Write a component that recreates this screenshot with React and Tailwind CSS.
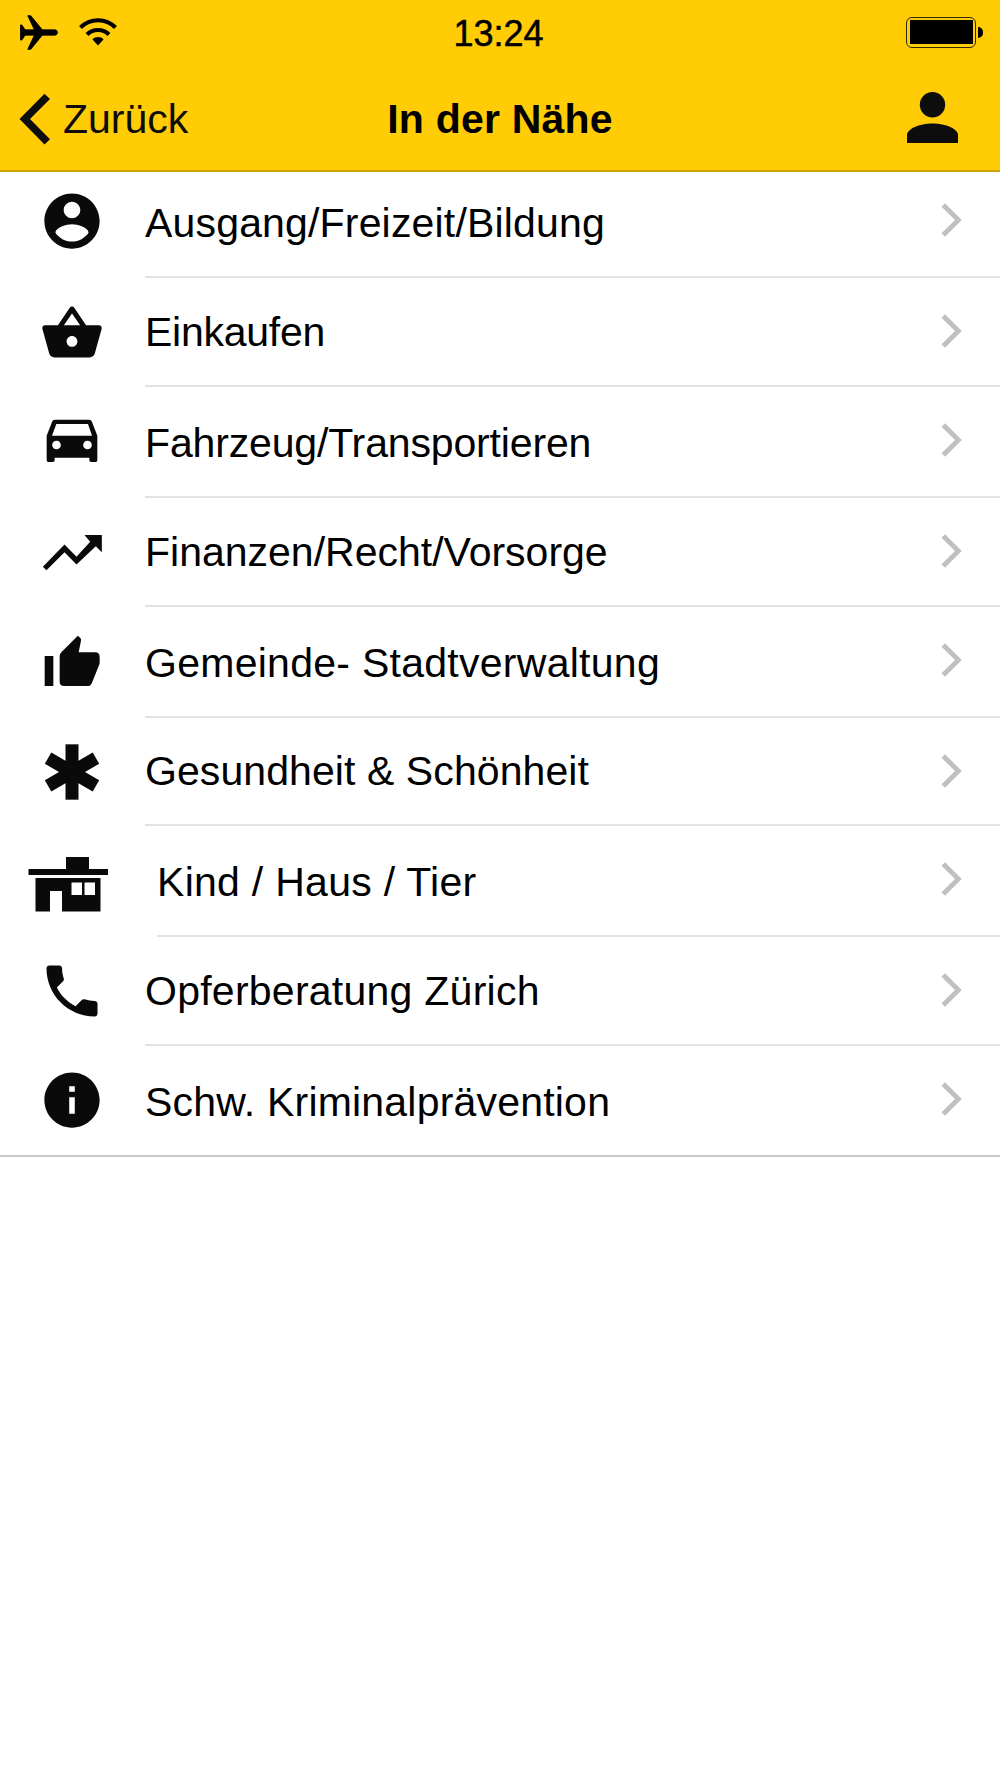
import React from 'react';
import { IoMdBasket, IoMdCall, IoMdContact, IoMdInformationCircle } from 'react-icons/io';

const CarIcon = ({ className }) => (
  <svg viewBox="0 0 204 204" className={className} fill="currentColor">
    <path
      fillRule="evenodd"
      d="M51 38H153q7 0 9 7L178 86V160q0 5-5 5h-14q-5 0-5-5v-8H50v8q0 5-5 5H31q-5 0-5-5V86L42 45q2-7 9-7zM55 51L42 86H162L150 51zM55.500 101a13 13 0 1 0 0 26a13 13 0 1 0 0-26zM148.500 101a13 13 0 1 0 0 26a13 13 0 1 0 0-26z"
    />
  </svg>
);

const TrendIcon = ({ className }) => (
  <svg viewBox="0 0 204 204" className={className} fill="currentColor">
    <path d="M14.500 146L79.500 79.500L115.500 116L156.500 71.500L139.500 51H191.500V103L173.500 85L115.500 139.500L79.500 103L25.500 157z" />
  </svg>
);

const ThumbIcon = ({ className }) => (
  <svg viewBox="0 0 204 204" className={className} fill="currentColor">
    <path d="M20 87h26v90H20z" />
    <path d="M119.500 26L127 33q3 3 2 8L122 76H172q13 0 13 15V106q0 5-2 9L162 167q-4 10-13 10H79q-14 0-14-13V88q0-7 5-12z" />
  </svg>
);

const AsteriskIcon = ({ className }) => (
  <svg viewBox="0 0 204 204" className={className} fill="currentColor">
    <rect x="82.500" y="19" width="39" height="166" />
    <rect x="82.500" y="19" width="39" height="166" transform="rotate(60 102 102)" />
    <rect x="82.500" y="19" width="39" height="166" transform="rotate(-60 102 102)" />
  </svg>
);

const HouseIcon = () => (
  <svg viewBox="0 0 80 56" className="w-20 h-14 mt-[11px]" fill="currentColor">
    <path d="M38 0h23v12h19v6H.5v-6H38z" />
    <path fillRule="evenodd" d="M7.500 21H72.500v33.500H34V34H22v20.500H7.500zM43.500 25.500V38h10.500V25.500zM56.500 25.500V38h10.500V25.500z" />
  </svg>
);

const categories = [
  { label: 'Ausgang/Freizeit/Bildung', icon: IoMdContact, height: 'h-[111px]', tracking: 'tracking-[0.17px]' },
  { label: 'Einkaufen', icon: IoMdBasket, height: 'h-[109px]', tracking: 'tracking-[-0.25px]' },
  { label: 'Fahrzeug/Transportieren', icon: CarIcon, height: 'h-[111px]', tracking: 'tracking-[-0.15px]' },
  { label: 'Finanzen/Recht/Vorsorge', icon: TrendIcon, height: 'h-[109px]', tracking: 'tracking-normal' },
  { label: 'Gemeinde- Stadtverwaltung', icon: ThumbIcon, height: 'h-[111px]', tracking: 'tracking-[0.27px]' },
  { label: 'Gesundheit & Schönheit', icon: AsteriskIcon, height: 'h-[108px]', tracking: 'tracking-[0.08px]' },
  { label: 'Kind / Haus / Tier', icon: HouseIcon, height: 'h-[111px]', tracking: 'tracking-[0.28px]', wide: true },
  { label: 'Opferberatung Zürich', icon: IoMdCall, height: 'h-[109px]', tracking: 'tracking-[0.25px]' },
  { label: 'Schw. Kriminalprävention', icon: IoMdInformationCircle, height: 'h-[111px]', tracking: 'tracking-[0.2px]' },
];

const StatusBar = () => (
  <div className="grid grid-cols-3 items-center h-16 pl-[17px] pr-[17px]">
    <div className="flex items-center gap-[21px] pl-[3px]">
      <svg viewBox="0 0 114 106" className="w-[38px] h-[35px]" fill="currentColor" stroke="currentColor" strokeWidth="2.500">
        <path d="M106 45q7 1 7 8t-7 8H67L32 104H23L43 61L15 61L5 76H1V30H5L15 45L43 45L23 2H32L67 45z" />
      </svg>
      <svg viewBox="0 0 38 28" className="w-[38px] h-7" fill="none" stroke="currentColor" strokeWidth="4">
        <path d="M1.500 9.500C11 -.3 27 -.3 36.500 9.500" />
        <path d="M8 16.500C14 10.500 24 10.500 30 16.500" />
        <path d="M13.500 21.500C16 18.300 22 18.300 24.500 21.500L19 27.500z" fill="currentColor" stroke="none" />
      </svg>
    </div>
    <span className="mt-[3px] pr-[3px] text-center text-[36px] leading-none [-webkit-text-stroke:0.5px_black]">13:24</span>
    <div className="flex items-center justify-end gap-0.5">
      <div className="w-[70px] h-[31px] p-[2.500px] border-[1.500px] border-black/80 rounded-md">
        <div className="w-full h-full bg-black" />
      </div>
      <div className="w-[5px] h-[11px] bg-black rounded-r-full" />
    </div>
  </div>
);

const NavBar = () => (
  <div className="grid grid-cols-3 items-center h-[106px] px-[19px]">
    <button className="flex items-center gap-[13px] text-[#0d0d0d]">
      <svg viewBox="0 0 31 52" className="w-[31px] h-[52px] mt-[3px]" fill="currentColor">
        <path d="M.5 26L25.500 .8L31 6L11 26L31 46.200L25.500 51.500z" />
      </svg>
      <span className="mt-1 text-[41px] leading-none">Zurück</span>
    </button>
    <h1 className="mt-1 text-center text-[41px] leading-none font-bold tracking-[0.2px] whitespace-nowrap">In der Nähe</h1>
    <svg viewBox="0 0 51 51" className="w-[51px] h-[51px] mr-[23px] justify-self-end text-[#0d0d0d]" fill="currentColor">
      <circle cx="25.500" cy="12.800" r="12.700" />
      <path d="M0 51V43C0 37 12 31.500 25.500 31.500S51 37 51 43V51z" />
    </svg>
  </div>
);

const CategoryRow = ({ label, icon: Icon, height, tracking, wide, last }) => (
  <li className={`flex ${height} ${last ? 'border-b-2 border-[#c8c7cc]' : ''}`}>
    <div className={`flex items-start justify-center shrink-0 pt-5 text-[#0a0a0a] ${wide ? 'w-[157px] pr-[21px]' : 'w-[145px] pr-px'}`}>
      <Icon className="w-[68px] h-[68px]" />
    </div>
    <div className={`flex flex-1 justify-between pr-[38px] ${last ? '' : 'border-b-2 border-[#e2e2e3]'}`}>
      <span className={`self-end pb-8 text-[41px] leading-[42px] whitespace-nowrap ${tracking}`}>{label}</span>
      <svg viewBox="0 0 21 34" className="w-[21px] h-[34px] mt-[35.500px] text-[#c0c0c0]" fill="currentColor">
        <path d="M4 .3L20.800 17L4 33.700L.5 30.200L14 17L.5 3.800z" />
      </svg>
    </div>
  </li>
);

const App = () => {
  return (
    <div className="w-[1000px] h-[1778px] bg-white text-black overflow-hidden font-['Liberation_Sans',Arial,sans-serif]">
      <header className="h-[172px] bg-[#ffcc05] border-b-2 border-[#cca300]">
        <StatusBar />
        <NavBar />
      </header>
      {/* first row is tucked slightly under the header */}
      <ul className="-mt-[5px]">
        {categories.map((category, index) => (
          <CategoryRow key={category.label} {...category} last={index === categories.length - 1} />
        ))}
      </ul>
    </div>
  );
};

export default App;
